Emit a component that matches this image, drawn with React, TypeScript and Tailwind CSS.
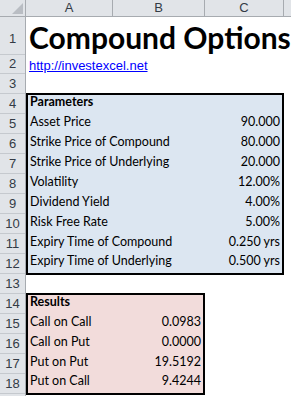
import React from "react";

const params: [string, string][] = [
  ["Asset Price", "90.000"],
  ["Strike Price of Compound", "80.000"],
  ["Strike Price of Underlying", "20.000"],
  ["Volatility", "12.00%"],
  ["Dividend Yield", "4.00%"],
  ["Risk Free Rate", "5.00%"],
  ["Expiry Time of Compound", "0.250 yrs"],
  ["Expiry Time of Underlying", "0.500 yrs"],
];

const results: [string, string][] = [
  ["Call on Call", "0.0983"],
  ["Call on Put", "0.0000"],
  ["Put on Put", "19.5192"],
  ["Put on Call", "9.4244"],
];

const rowHeights = [38, 19, 20, 20, 20, 20, 20, 20, 20, 20, 20, 20, 20, 20, 20, 20, 20, 20];

const App: React.FC = () => {
  return (
    <div className="w-[291px] h-[396px] overflow-hidden bg-white flex flex-col font-['Liberation_Sans',Arial,sans-serif]">
      {/* Column headers */}
      <div className="flex h-[17px] shrink-0 bg-[#e1e4e8] border-b border-[#a7abb0] text-[13px] text-[#333b45]">
        <div className="relative w-[26px] shrink-0 border-r border-[#a7abb0]">
          <div className="absolute right-[2px] bottom-[2px] w-0 h-0 border-l-[11px] border-l-transparent border-b-[11px] border-b-[#b9bdc3]" />
        </div>
        <div className="w-[87px] shrink-0 border-r border-[#a7abb0] flex items-center justify-center">A</div>
        <div className="w-[92px] shrink-0 border-r border-[#a7abb0] flex items-center justify-center">B</div>
        <div className="w-[79px] shrink-0 border-r border-[#a7abb0] flex items-center justify-center">C</div>
        <div className="flex-1" />
      </div>

      <div className="flex flex-1 min-h-0">
        {/* Row headers */}
        <div className="w-[26px] shrink-0 bg-[#e1e4e8] border-r border-[#a7abb0] flex flex-col text-[13px] text-[#333b45]">
          {rowHeights.map((h, i) => (
            <div
              key={i}
              style={{ height: h }}
              className={`shrink-0 border-b border-[#c5c9ce] flex justify-center ${
                i === 0 ? "items-end pb-[6px]" : "items-center"
              }`}
            >
              {i + 1}
            </div>
          ))}
          <div className="flex-1" />
        </div>

        {/* Sheet body */}
        <div className="flex-1 flex flex-col font-[Lato,sans-serif] text-[12.5px] text-black">
          <div className="h-[38px] shrink-0 flex items-end pl-[3px] pb-[3px]">
            <span className="text-[30px] font-bold leading-none whitespace-nowrap">Compound Options</span>
          </div>
          <div className="h-[19px] shrink-0 flex items-end pl-[3px] pb-[1px]">
            <span className="font-['Liberation_Sans',Arial,sans-serif] text-[13px] text-[#0000ff] underline leading-[15px]">
              http://investexcel.net
            </span>
          </div>
          <div className="h-[19px] shrink-0" />

          {/* Parameters */}
          <div className="w-[258px] shrink-0 border-2 border-black bg-[#dce6f1] flex flex-col">
            <div className="h-[19px] flex items-end pl-[2px] pb-[2px] font-bold">Parameters</div>
            {params.map(([label, value], i) => (
              <div
                key={label}
                className={`${i === params.length - 1 ? "h-[19px]" : "h-[20px]"} flex items-end justify-between pl-[2px] pr-[2px] pb-[2px]`}
              >
                <span className="whitespace-nowrap">{label}</span>
                <span className="whitespace-nowrap">{value}</span>
              </div>
            ))}
          </div>

          <div className="h-[18px] shrink-0" />

          {/* Results */}
          <div className="w-[179px] shrink-0 border-2 border-black bg-[#f2dcdb] flex flex-col">
            <div className="h-[19px] flex items-end pl-[2px] pb-[2px] font-bold">Results</div>
            {results.map(([label, value], i) => (
              <div
                key={label}
                className={`${i === results.length - 1 ? "h-[19px]" : "h-[20px]"} flex items-end justify-between pl-[2px] pr-[2px] pb-[2px]`}
              >
                <span className="whitespace-nowrap">{label}</span>
                <span className="whitespace-nowrap">{value}</span>
              </div>
            ))}
          </div>
        </div>
      </div>
    </div>
  );
};

export default App;
